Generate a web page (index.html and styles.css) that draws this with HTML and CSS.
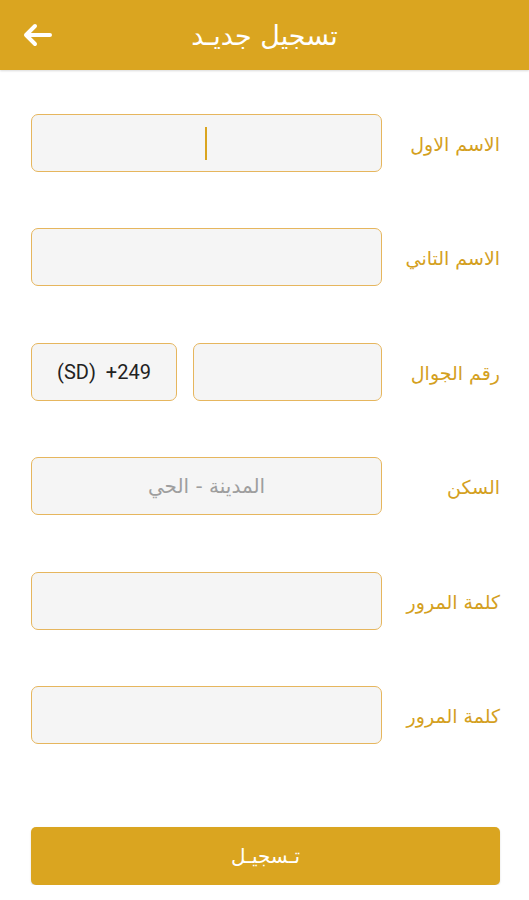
FILE: index.html
```html
<!DOCTYPE html>
<html lang="ar">
<head>
<meta charset="utf-8">
<link rel="stylesheet" href="styles.css">
</head>
<body>
<header class="topbar">
  <svg class="back" width="32" height="24" viewBox="0 0 32 24"><path d="M29 12H5M14 3L5 12l9 9" fill="none" stroke="#fff" stroke-width="4" stroke-linecap="round" stroke-linejoin="round"/></svg>
  <h1 class="title">تسجيل جديـد</h1>
</header>
<main class="form">
  <div class="row">
    <div class="field"><span class="caret"></span></div>
    <label class="label">الاسم الاول</label>
  </div>
  <div class="row">
    <div class="field"></div>
    <label class="label">الاسم التاني</label>
  </div>
  <div class="row">
    <div class="phone">
      <div class="field code">(SD)&nbsp;&nbsp;+249</div>
      <div class="field num"></div>
    </div>
    <label class="label">رقم الجوال</label>
  </div>
  <div class="row">
    <div class="field placeholder">المدينة - الحي</div>
    <label class="label">السكن</label>
  </div>
  <div class="row">
    <div class="field"></div>
    <label class="label">كلمة المرور</label>
  </div>
  <div class="row">
    <div class="field"></div>
    <label class="label">كلمة المرور</label>
  </div>
  <button class="submit">تـسجيـل</button>
</main>
</body>
</html>
```

FILE: styles.css
```css
* { box-sizing: border-box; }
body {
  margin: 0;
  background: #fff;
  font-family: "DejaVu Sans", "Noto Sans", sans-serif;
}
.topbar {
  height: 70px;
  background: #DAA520;
  display: flex;
  align-items: center;
  position: relative;
  box-shadow: 0 1px 2px rgba(0,0,0,0.15);
}
.back {
  margin-left: 21px;
}
.title {
  position: absolute;
  left: 0;
  right: 0;
  margin: 0;
  text-align: center;
  color: #fff;
  font-weight: normal;
  font-size: 27px;
  pointer-events: none;
}
.form {
  display: flex;
  flex-direction: column;
  padding: 44px 29px 0 31px;
  gap: 56.4px;
}
.row {
  display: flex;
  align-items: center;
  height: 58px;
}
.field {
  width: 351px;
  height: 58px;
  background: #F5F5F5;
  border: 1.5px solid #E6B65E;
  border-radius: 7px;
  display: flex;
  align-items: center;
  justify-content: center;
  position: relative;
}
.caret {
  width: 2px;
  height: 33px;
  background: #DAA520;
  position: relative;
  left: -1px;
}
.label {
  flex: 1;
  text-align: right;
  color: #D4A01E;
  font-size: 19px;
  padding-top: 2px;
}
.phone {
  width: 351px;
  display: flex;
  gap: 16px;
}
.field.code {
  width: 146px;
  font-family: Roboto, sans-serif;
  font-size: 20px;
  color: #222;
}
.field.num {
  width: 189px;
}
.placeholder {
  color: #9E9E9E;
  font-size: 20px;
}
.submit {
  margin-top: 26.6px;
  height: 58px;
  width: 469px;
  border: none;
  border-radius: 5px;
  background: #DAA520;
  color: #fff;
  font-family: "DejaVu Sans", sans-serif;
  font-size: 20px;
  box-shadow: 0 1px 2px rgba(0,0,0,0.15);
}
```
